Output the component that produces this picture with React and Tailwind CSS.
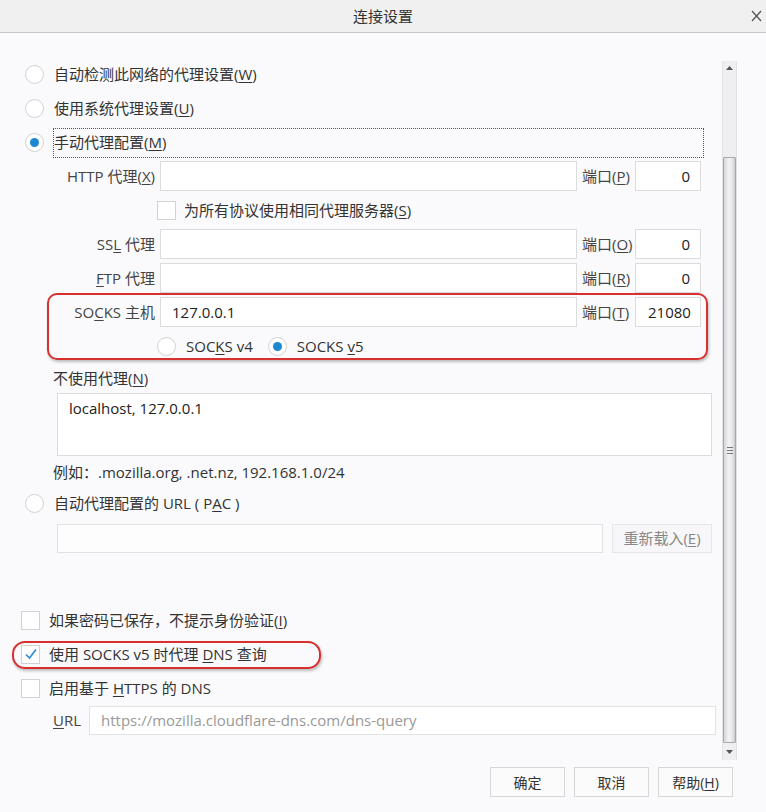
import React from "react";

const Radio = ({ checked }) => (
  <span className="w-[19px] h-[19px] rounded-full border border-[#d2d2d2] bg-white flex items-center justify-center shrink-0">
    {checked && <span className="w-[9px] h-[9px] rounded-full bg-[#1d87d2]" />}
  </span>
);

const Check = ({ checked }) => (
  <span className="w-[19px] h-[19px] border border-[#d2d2d2] bg-white flex items-center justify-center shrink-0">
    {checked && (
      <svg width="14" height="14" viewBox="0 0 14 14">
        <path d="M2 7.5 L5.5 11 L12 2.5" fill="none" stroke="#2a8ad6" strokeWidth="1.6" />
      </svg>
    )}
  </span>
);

const U = ({ children }) => <span className="underline underline-offset-2 decoration-1">{children}</span>;

const Input = ({ w, children, className = "" }) => (
  <div className={`h-[30px] bg-white border border-[#dcdcdc] flex items-center ${w} ${className}`}>{children}</div>
);

const ProxyRow = ({ label, value, port, portVal, portLeft }) => (
  <div className="flex items-center h-[30px]">
    <div className="w-[160px] pr-[5px] text-right text-[#444] whitespace-nowrap">{label}</div>
    <Input w="w-[417px]">
      {value && <span className="pl-[11px] text-[#222]">{value}</span>}
    </Input>
    <div className="w-[58px] pl-[5px] text-[#444] whitespace-nowrap">{port}</div>
    <Input w="w-[66px]" className={`overflow-hidden ${portLeft ? "justify-start pl-[12px]" : "justify-end pr-[10px]"}`}>
      <span className="text-[#222] whitespace-nowrap">{portVal}</span>
    </Input>
  </div>
);

export default function App() {
  return (
    <div className="w-[766px] h-[812px] bg-[#fafafc] flex flex-col text-[15px] text-[#333] font-['Open_Sans','Noto_Sans_CJK_SC',sans-serif] overflow-hidden">
      {/* Title bar */}
      <div className="h-[33px] shrink-0 bg-[#f0f0f0] border-b border-[#c6c6c6] relative flex items-center justify-center">
        <span className="text-[15px] text-[#333]">连接设置</span>
        <svg className="absolute right-[4px] top-[10px]" width="11" height="12" viewBox="0 0 11 12">
          <path d="M1 1 L10 11 M10 1 L1 11" stroke="#555" strokeWidth="1.3" />
        </svg>
      </div>

      <div className="flex h-[727px] shrink-0">
        {/* Content */}
        <div className="w-[722px] relative pt-[24px]">
          <div className="flex items-center h-[34px] pl-[25px] gap-[10px]">
            <Radio />
            <span>自动检测此网络的代理设置(<U>W</U>)</span>
          </div>
          <div className="flex items-center h-[34px] pl-[25px] gap-[10px]">
            <Radio />
            <span>使用系统代理设置(<U>U</U>)</span>
          </div>
          <div className="flex items-center h-[35px] pl-[25px] gap-[9px]">
            <Radio checked />
            <div className="w-[651px] h-[30px] border border-dotted border-[#555] flex items-center">
              <span>手动代理配置(<U>M</U>)</span>
            </div>
          </div>

          <div className="mt-[1px]">
            <ProxyRow label={<>HTTP 代理(<U>X</U>)</>} port={<>端口(<U>P</U>)</>} portVal="0" />
            <div className="flex items-center h-[38px] pl-[157px] gap-[8px]">
              <Check />
              <span>为所有协议使用相同代理服务器(<U>S</U>)</span>
            </div>
            <div className="flex flex-col gap-[4px]">
              <ProxyRow label={<>SS<U>L</U> 代理</>} port={<>端口(<U>O</U>)</>} portVal="0" />
              <ProxyRow label={<><U>F</U>TP 代理</>} port={<>端口(<U>R</U>)</>} portVal="0" />
              <ProxyRow label={<>SO<U>C</U>KS 主机</>} value="127.0.0.1" port={<>端口(<U>T</U>)</>} portVal="21080" portLeft />
            </div>
            <div className="flex items-center h-[38px] pl-[157px]">
              <Radio />
              <span className="ml-[10px]">SOC<U>K</U>S v4</span>
              <span className="ml-[15px]"><Radio checked /></span>
              <span className="ml-[10px]">SOCKS <U>v</U>5</span>
            </div>
          </div>

          <div className="h-[26px] flex items-center pl-[53px]">
            <span>不使用代理(<U>N</U>)</span>
          </div>
          <div className="ml-[57px] mt-[2px] w-[655px] h-[63px] bg-white border border-[#dcdcdc] pl-[11px] pt-[3px] text-[#222]">
            localhost, 127.0.0.1
          </div>
          <div className="h-[32px] flex items-center pl-[53px]">
            <span>例如：.mozilla.org, .net.nz, 192.168.1.0/24</span>
          </div>
          <div className="flex items-center h-[30px] pl-[25px] gap-[10px]">
            <Radio />
            <span>自动代理配置的 URL ( P<U>A</U>C )</span>
          </div>
          <div className="flex items-center mt-[6px] pl-[57px] gap-[9px]">
            <div className="w-[546px] h-[29px] bg-[#fdfdfd] border border-[#e2e2e2]" />
            <div className="w-[100px] h-[29px] bg-[#f7f7f9] border border-[#e6e6e6] flex items-center justify-center text-[#888]">
              重新载入(<U>E</U>)
            </div>
          </div>

          <div className="mt-[50px]">
            <div className="flex items-center h-[34px] pl-[21px] gap-[9px]">
              <Check />
              <span>如果密码已保存，不提示身份验证(<U>I</U>)</span>
            </div>
            <div className="flex items-center h-[34px] pl-[21px] gap-[9px]">
              <Check checked />
              <span>使用 SOCKS v5 时代理 <U>D</U>NS 查询</span>
            </div>
            <div className="flex items-center h-[34px] pl-[21px] gap-[9px]">
              <Check />
              <span>启用基于 <U>H</U>TTPS 的 DNS</span>
            </div>
            <div className="flex items-center mt-[1px] pl-[53px]">
              <span className="w-[36px] text-[#444]"><U>U</U>RL</span>
              <div className="w-[627px] h-[29px] bg-white border border-[#e2e2e2] flex items-center pl-[11px] text-[#999] whitespace-nowrap overflow-hidden">
                https://mozilla.cloudflare-dns.com/dns-query
              </div>
            </div>
          </div>

          {/* Red annotation outlines */}
          <div className="absolute left-[47px] top-[260px] w-[661px] h-[67px] rounded-[10px] border-2 border-[#d7302e] shadow-[1px_2px_3px_rgba(0,0,0,0.25)] pointer-events-none" />
          <div className="absolute left-[12px] top-[608px] w-[309px] h-[28px] rounded-[13px] border-2 border-[#d7302e] shadow-[1px_2px_3px_rgba(0,0,0,0.25)] pointer-events-none" />
        </div>

        {/* Scrollbar */}
        <div className="w-[15px] mt-[28px] h-[699px] flex flex-col bg-[#efeff1] border-x border-[#e2e2e4]">
          <div className="h-[14px] flex items-center justify-center shrink-0">
            <svg width="7" height="4" viewBox="0 0 7 4"><path d="M0 4 L3.5 0 L7 4 Z" fill="#555" /></svg>
          </div>
          <div className="h-[82px] shrink-0" />
          <div className="flex-1 border border-[#a8a8a8] rounded-[1px] bg-[linear-gradient(90deg,#d6d6d8,#f4f4f6_45%,#e4e4e6_80%,#c8c8ca)] flex items-center justify-center">
            <div className="flex flex-col gap-[2px]">
              <div className="w-[6px] h-[1px] bg-[#777]" />
              <div className="w-[6px] h-[1px] bg-[#777]" />
              <div className="w-[6px] h-[1px] bg-[#777]" />
            </div>
          </div>
          <div className="h-[17px] flex items-center justify-center shrink-0">
            <svg width="7" height="4" viewBox="0 0 7 4"><path d="M0 0 L3.5 4 L7 0 Z" fill="#555" /></svg>
          </div>
        </div>
      </div>

      {/* Buttons */}
      <div className="flex justify-end gap-[9px] pr-[33px] mt-[7px]">
        <div className="w-[75px] h-[30px] bg-[#fbfbfb] border border-[#d6d6d6] flex items-center justify-center text-[14px]">确定</div>
        <div className="w-[75px] h-[30px] bg-[#fbfbfb] border border-[#d6d6d6] flex items-center justify-center text-[14px]">取消</div>
        <div className="w-[75px] h-[30px] bg-[#fbfbfb] border border-[#d6d6d6] flex items-center justify-center text-[14px]">帮助(<U>H</U>)</div>
      </div>
    </div>
  );
}
